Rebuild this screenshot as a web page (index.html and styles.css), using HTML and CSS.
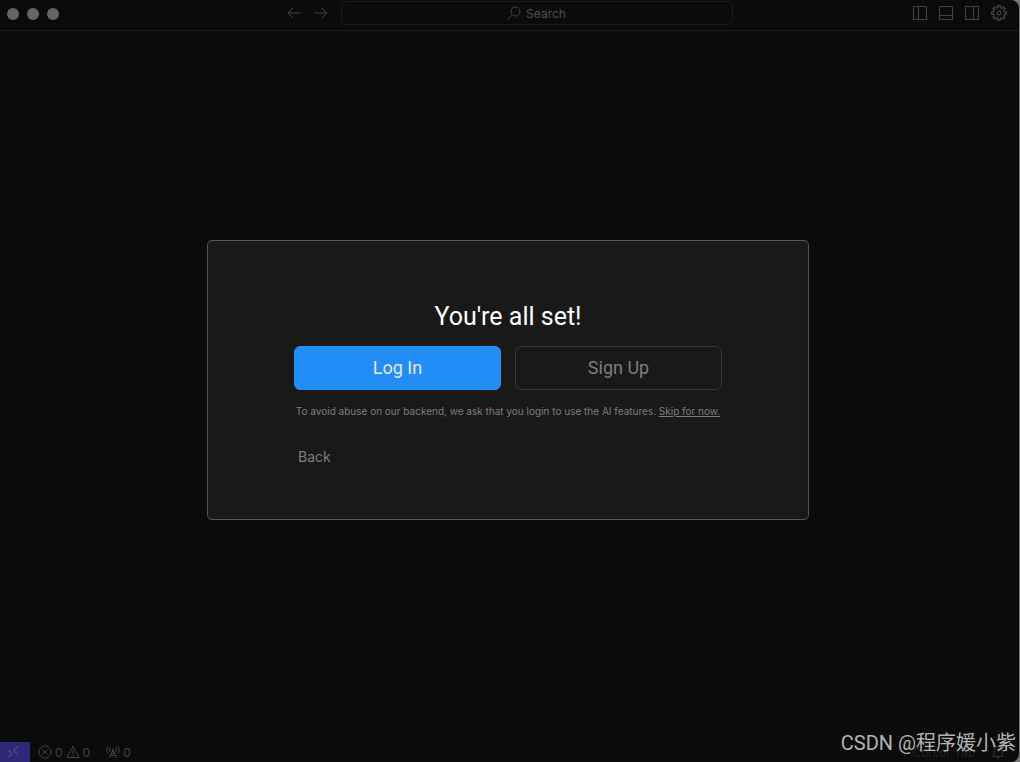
FILE: index.html
```
<!DOCTYPE html>
<html lang="en">
<head>
	<meta charset="UTF-8">
	<title>Cursor</title>
	<link rel="stylesheet" href="styles.css">
</head>
<body>
<div class="window">
	<header class="titlebar">
		<div class="lights">
			<span class="light"></span>
			<span class="light"></span>
			<span class="light"></span>
		</div>
		<div class="center">
			<button class="icon_btn" aria-label="Go back">
				<svg width="14" height="14" viewBox="0 0 14 14"><path d="M6 2L1 7l5 5M1 7h12.500"/></svg>
			</button>
			<button class="icon_btn" aria-label="Go forward">
				<svg width="14" height="14" viewBox="0 0 14 14"><path d="M8 2l5 5-5 5M13 7H.5"/></svg>
			</button>
			<button class="search">
				<svg width="14" height="14" viewBox="0 0 14 14"><circle cx="8.500" cy="5.500" r="4.500"/><path d="M5.300 8.700L.5 13.500"/></svg>
				<span>Search</span>
			</button>
		</div>
		<div class="actions">
			<button class="icon_btn" aria-label="Toggle left panel">
				<svg width="14" height="14" viewBox="0 0 14 14"><path d="M.5.5h13v13H.5zM5.500.5v13"/></svg>
			</button>
			<button class="icon_btn" aria-label="Toggle bottom panel">
				<svg width="14" height="14" viewBox="0 0 14 14"><path d="M.5.5h13v13H.5zM.5 9.500h13"/></svg>
			</button>
			<button class="icon_btn" aria-label="Toggle right panel">
				<svg width="14" height="14" viewBox="0 0 14 14"><path d="M.5.5h13v13H.5zM8.500.5v13"/></svg>
			</button>
			<button class="icon_btn" aria-label="Settings">
				<svg class="gear" width="16" height="16" viewBox="0 0 16 16"><path d="M6.700.7h2.600L9.200 2.600 10.970 3.330 12.240 1.920 14.080 3.760 12.670 5.030 13.400 6.800 15.300 6.700v2.600L13.400 9.200 12.670 10.970 14.080 12.240 12.240 14.080 10.970 12.670 9.200 13.400 9.300 15.300H6.700L6.800 13.400 5.030 12.670 3.760 14.080 1.920 12.240 3.330 10.970 2.600 9.200.7 9.300V6.700L2.600 6.800 3.330 5.030 1.920 3.760 3.760 1.920 5.030 3.330 6.800 2.600z"/><circle cx="8" cy="8" r="1.800"/></svg>
			</button>
		</div>
	</header>

	<main class="content">
		<section class="dialog">
			<h1>You're all set!</h1>
			<div class="buttons">
				<button class="btn btn_primary">Log In</button>
				<button class="btn">Sign Up</button>
			</div>
			<p class="note">To avoid abuse on our backend, we ask that you login to use the AI features. <a href="#">Skip for now.</a></p>
			<button class="back">Back</button>
		</section>
	</main>

	<footer class="statusbar">
		<button class="remote" aria-label="Remote window">
			<svg width="12" height="12" viewBox="0 0 12 12"><path d="M1 3.500l4 4-4 4M10.500.5l-4 4 4 4"/></svg>
		</button>
		<button class="status problems">
			<svg width="14" height="14" viewBox="0 0 14 14"><circle cx="7" cy="7" r="6"/><path d="M4.500 4.500l5 5M9.500 4.500l-5 5"/></svg>
			<span>0</span>
			<svg width="14" height="14" viewBox="0 0 14 14"><path d="M7 1.500l6 11H1zM7 5v4M7 10v1.200"/></svg>
			<span>0</span>
		</button>
		<button class="status">
			<svg width="14" height="14" viewBox="0 0 14 14"><path d="M3.500 13L7 5l3.500 8M4.500 10.500h5M5.500 8.500h3M4.500 7.500a3.500 3.500 0 0 1 0-5M9.500 7.500a3.500 3.500 0 0 0 0-5M2.500 9a5.500 5.500 0 0 1 0-8M11.500 9a5.500 5.500 0 0 0 0-8"/><circle cx="7" cy="5" r="1"/></svg>
			<span>0</span>
		</button>
		<span class="status tab">Cursor Tab</span>
		<button class="status bell" aria-label="Notifications">
			<svg width="14" height="14" viewBox="0 0 14 14"><path d="M1.500 11.500h11L11 9V5.500a4 4 0 0 0-8 0V9zM5.500 11.500a1.500 1.500 0 0 0 3 0"/></svg>
		</button>
	</footer>
	<div class="watermark">CSDN @程序媛小紫</div>
</div>
</body>
</html>
```
FILE: styles.css
```
*{
	box-sizing: border-box;
}
body{
	margin: 0;
	padding-right: 1px;
	background: #777;
	font-family: Inter, "Liberation Sans", "Noto Sans CJK SC", sans-serif;
	font-size: 12px;
	color: #444;
}
button{
	margin: 0;
	padding: 0;
	border: 0;
	background: none;
	font: inherit;
	color: inherit;
}
svg{
	display: block;
	fill: none;
	stroke: currentColor;
	stroke-width: 1;
}
.window{
	position: relative;
	display: flex;
	flex-direction: column;
	min-height: 100vh;
	overflow: hidden;
	background: #0b0b0b;
	border-radius: 0 8px 8px 0;
}
.titlebar{
	display: grid;
	grid-template-columns: 1fr auto 1fr;
	align-items: center;
	height: 31px;
	padding: 0 12px 4px;
	border-bottom: 1px solid #1c1c1c;
}
.lights{
	display: flex;
	gap: 8px;
	margin-left: -5px;
	padding-top: 2px;
}
.light{
	width: 12px;
	height: 12px;
	border-radius: 50%;
	background: #666;
}
.center{
	display: flex;
	align-items: center;
	gap: 13px;
}
.search{
	display: flex;
	align-items: center;
	justify-content: center;
	gap: 5px;
	width: 392px;
	height: 24px;
	border: 1px solid #1c1c1c;
	border-radius: 6px;
}
.search span{
	color: #505050;
}
.actions{
	display: flex;
	justify-content: flex-end;
	align-items: center;
	gap: 12px;
}
.gear{
	stroke-width: 1.2;
}
.content{
	flex: 1;
	display: flex;
	align-items: center;
	justify-content: center;
	padding-right: 3px;
	padding-bottom: 14px;
}
.dialog{
	display: flex;
	flex-direction: column;
	align-items: center;
	width: 602px;
	padding: 60px 84px 50px;
	border: 1px solid #555;
	border-radius: 5px;
	background: #191919;
}
.dialog h1{
	margin: 0;
	font-family: Roboto, "Liberation Sans", sans-serif;
	font-size: 25px;
	font-weight: 400;
	line-height: 32px;
	color: #fff;
}
.buttons{
	display: flex;
	gap: 14px;
	align-self: stretch;
	margin-top: 13px;
	padding: 0 2px;
}
.btn{
	flex: 1;
	height: 44px;
	border: 1px solid #3a3a3a;
	border-radius: 6px;
	font-family: Roboto, "Liberation Sans", sans-serif;
	font-size: 18px;
	color: #7e7e7e;
}
.btn_primary{
	border-color: #228df4;
	background: #228df4;
	color: #e8e8e8;
}
.note{
	margin: 13px 0 0;
	font-size: 10px;
	line-height: 16px;
	white-space: nowrap;
	color: #7e7e7e;
}
.note a{
	color: inherit;
}
.back{
	align-self: flex-start;
	margin: 26px 0 0 6px;
	font-size: 14px;
	line-height: 24px;
	color: #7e7e7e;
}
.statusbar{
	display: flex;
	align-items: center;
	height: 20px;
	padding-right: 14px;
}
.remote{
	display: flex;
	align-items: center;
	justify-content: center;
	width: 30px;
	height: 20px;
	padding-right: 4px;
	background: #2e2877;
	color: #666;
}
.status{
	display: flex;
	align-items: center;
	gap: 3px;
	margin-left: 16px;
}
.problems{
	margin-left: 8px;
}
.tab{
	margin-left: auto;
	color: #222;
}
.bell{
	color: #333;
}
.watermark{
	position: absolute;
	right: 3px;
	bottom: 4px;
	font-family: Roboto, "Noto Sans CJK SC", sans-serif;
	font-size: 20px;
	line-height: 30px;
	color: #b4b4b4;
}
```
